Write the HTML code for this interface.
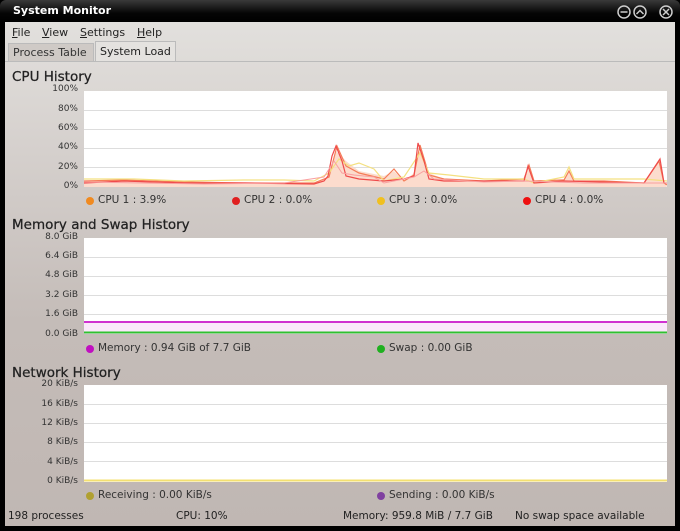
<!DOCTYPE html>
<html><head><style>
*{margin:0;padding:0;box-sizing:border-box}
body{width:680px;height:531px;overflow:hidden;background:#000;font-family:"DejaVu Sans","Liberation Sans",sans-serif;position:relative}
.tb{position:absolute;left:0;top:0;width:680px;height:22px;background:linear-gradient(#3a3a3a,#050505 60%,#000);border-radius:6px 6px 0 0}
.win{position:absolute;left:5px;top:22px;width:670px;height:504px;background:linear-gradient(#e2e0dd 0px,#d6d1ce 120px,#c4bcb8 300px,#c0b7b3 504px)}
.t{position:absolute;white-space:nowrap;color:#222}
.title{position:absolute;left:13px;top:4px;color:#fff;font-weight:bold;font-size:11px}
.menu{font-size:11px;top:4px}
.h{font-size:13.5px;color:#222;-webkit-text-stroke:0.25px #222}
.yl{font-size:9px;color:#333;text-align:right;width:70px;left:3px}
.lg{font-size:10.5px;color:#333}
.dot{position:absolute;width:8px;height:8px;border-radius:50%}
.plot{position:absolute;left:79px;width:583px;background:#fff}
.st{font-size:10.5px;color:#222;top:488px}
</style></head><body>
<div class="tb"></div>
<div class="title">System Monitor</div>
<svg style="position:absolute;left:616px;top:4px" width="60" height="16">
<g fill="none" stroke="#ccc" stroke-width="1.5">
<circle cx="8" cy="8" r="6"/><line x1="4.5" y1="8" x2="11.5" y2="8"/>
<circle cx="24" cy="8" r="6"/><polyline points="20.5,10 24,6.5 27.5,10"/>
<circle cx="50" cy="8" r="6"/><line x1="47" y1="5" x2="53" y2="11"/><line x1="53" y1="5" x2="47" y2="11"/>
</g></svg>
<div class="win">
<div class="t menu" style="left:7px"><u>F</u>ile</div>
<div class="t menu" style="left:37px"><u>V</u>iew</div>
<div class="t menu" style="left:75px"><u>S</u>ettings</div>
<div class="t menu" style="left:132px"><u>H</u>elp</div>
<div style="position:absolute;left:3px;top:21px;width:86px;height:18px;background:#cfcac6;border:1px solid #bbb;border-bottom:none"></div>
<div class="t" style="left:8px;top:24px;font-size:11px;color:#333">Process Table</div>
<div style="position:absolute;left:90px;top:19px;width:81px;height:21px;background:#e4e2df;border:1px solid #bbb;border-bottom:none"></div>
<div class="t" style="left:95px;top:23px;font-size:11px">System Load</div>
<div style="position:absolute;left:0;top:39px;width:670px;height:1px;background:#bbb"></div>

<div class="t h" style="left:7px;top:47px">CPU History</div>
<div class="t yl" style="top:62px">100%</div>
<div class="t yl" style="top:82px">80%</div>
<div class="t yl" style="top:101px">60%</div>
<div class="t yl" style="top:120px">40%</div>
<div class="t yl" style="top:140px">20%</div>
<div class="t yl" style="top:159px">0%</div>
<svg class="plot" style="top:69px;height:96px" width="583" height="96">
<g stroke="#ddd" stroke-width="1"><line x1="0" y1="19.5" x2="583" y2="19.5"/><line x1="0" y1="38.5" x2="583" y2="38.5"/><line x1="0" y1="57.5" x2="583" y2="57.5"/><line x1="0" y1="76.5" x2="583" y2="76.5"/></g>
<polygon fill="#fbd3c0" opacity=".8" points="0,96 0,90 40,89 100,91 160,92 230,92 245,86 252,60 262,70 275,80 300,85 310,80 320,90 330,82 335,60 345,82 360,88 400,90 440,87 445,78 450,90 480,88 485,78 490,90 520,90 560,92 575,68 580,90 583,96"/>
<polyline fill="none" stroke="#f57c57" stroke-width="1.2" points="0,90 40,89 100,91 160,92 230,92 245,86 253,55 262,75 275,82 300,88 310,78 320,90 330,84 336,54 345,84 360,88 400,90 440,88 445,74 450,90 480,89 485,80 490,90 520,90 560,92 575,70 580,92 583,94"/>
<polyline fill="none" stroke="#f4e080" stroke-width="1.2" points="0,88 50,88 100,90 160,89 200,89 230,90 245,82 255,68 265,75 275,72 290,78 300,90 320,86 336,62 345,82 365,84 400,88 440,88 450,92 480,86 485,76 490,88 520,88 560,88 583,90"/>
<polyline fill="none" stroke="#ef4b4b" stroke-width="1.2" points="0,92 40,90 100,92 160,92 230,93 240,90 244,85 248,65 252,55 258,70 262,85 275,88 300,90 320,88 330,85 334,52 340,70 345,88 360,90 400,90 440,90 444,75 450,92 480,90 560,92 576,68 580,92 583,92"/>
<polyline fill="none" stroke="#f9a0a0" stroke-width="1" points="0,91 60,92 120,93 200,92 240,86 250,70 258,82 270,84 290,86 300,92 330,86 340,80 350,88 400,91 440,90 500,92 583,92"/>
</svg>
<div class="dot" style="left:81px;top:175px;background:#f08a20"></div><div class="t lg" style="left:93px;top:172px">CPU 1 : 3.9%</div>
<div class="dot" style="left:227px;top:175px;background:#e02020"></div><div class="t lg" style="left:239px;top:172px">CPU 2 : 0.0%</div>
<div class="dot" style="left:372px;top:175px;background:#f0c020"></div><div class="t lg" style="left:384px;top:172px">CPU 3 : 0.0%</div>
<div class="dot" style="left:518px;top:175px;background:#ee1010"></div><div class="t lg" style="left:530px;top:172px">CPU 4 : 0.0%</div>

<div class="t h" style="left:7px;top:195px">Memory and Swap History</div>
<div class="t yl" style="top:210px">8.0 GiB</div>
<div class="t yl" style="top:229px">6.4 GiB</div>
<div class="t yl" style="top:248px">4.8 GiB</div>
<div class="t yl" style="top:268px">3.2 GiB</div>
<div class="t yl" style="top:287px">1.6 GiB</div>
<div class="t yl" style="top:307px">0.0 GiB</div>
<svg class="plot" style="top:216px;height:96px" width="583" height="96">
<g stroke="#ddd"><line x1="0" y1="19.5" x2="583" y2="19.5"/><line x1="0" y1="38.5" x2="583" y2="38.5"/><line x1="0" y1="57.5" x2="583" y2="57.5"/><line x1="0" y1="76.5" x2="583" y2="76.5"/></g>
<rect x="0" y="84" width="583" height="12" fill="#fae8fa"/>
<line x1="0" y1="84" x2="583" y2="84" stroke="#d030d0" stroke-width="2"/>
<line x1="0" y1="94.5" x2="583" y2="94.5" stroke="#30c030" stroke-width="2"/>
</svg>
<div class="dot" style="left:81px;top:323px;background:#c010c0"></div><div class="t lg" style="left:93px;top:320px">Memory : 0.94 GiB of 7.7 GiB</div>
<div class="dot" style="left:372px;top:323px;background:#20b020"></div><div class="t lg" style="left:384px;top:320px">Swap : 0.00 GiB</div>

<div class="t h" style="left:7px;top:343px">Network History</div>
<div class="t yl" style="top:357px">20 KiB/s</div>
<div class="t yl" style="top:377px">16 KiB/s</div>
<div class="t yl" style="top:396px">12 KiB/s</div>
<div class="t yl" style="top:415px">8 KiB/s</div>
<div class="t yl" style="top:435px">4 KiB/s</div>
<div class="t yl" style="top:454px">0 KiB/s</div>
<svg class="plot" style="top:363px;height:97px" width="583" height="97">
<g stroke="#ddd"><line x1="0" y1="19.5" x2="583" y2="19.5"/><line x1="0" y1="38.5" x2="583" y2="38.5"/><line x1="0" y1="57.5" x2="583" y2="57.5"/><line x1="0" y1="76.5" x2="583" y2="76.5"/></g>
<line x1="0" y1="95.5" x2="583" y2="95.5" stroke="#f4e070" stroke-width="2"/>
</svg>
<div class="dot" style="left:81px;top:470px;background:#b0a030"></div><div class="t lg" style="left:93px;top:467px">Receiving : 0.00 KiB/s</div>
<div class="dot" style="left:372px;top:470px;background:#8040a0"></div><div class="t lg" style="left:384px;top:467px">Sending : 0.00 KiB/s</div>

<div class="t st" style="left:3px">198 processes</div>
<div class="t st" style="left:171px">CPU: 10%</div>
<div class="t st" style="left:338px">Memory: 959.8 MiB / 7.7 GiB</div>
<div class="t st" style="left:510px">No swap space available</div>
</div>
</body></html>
